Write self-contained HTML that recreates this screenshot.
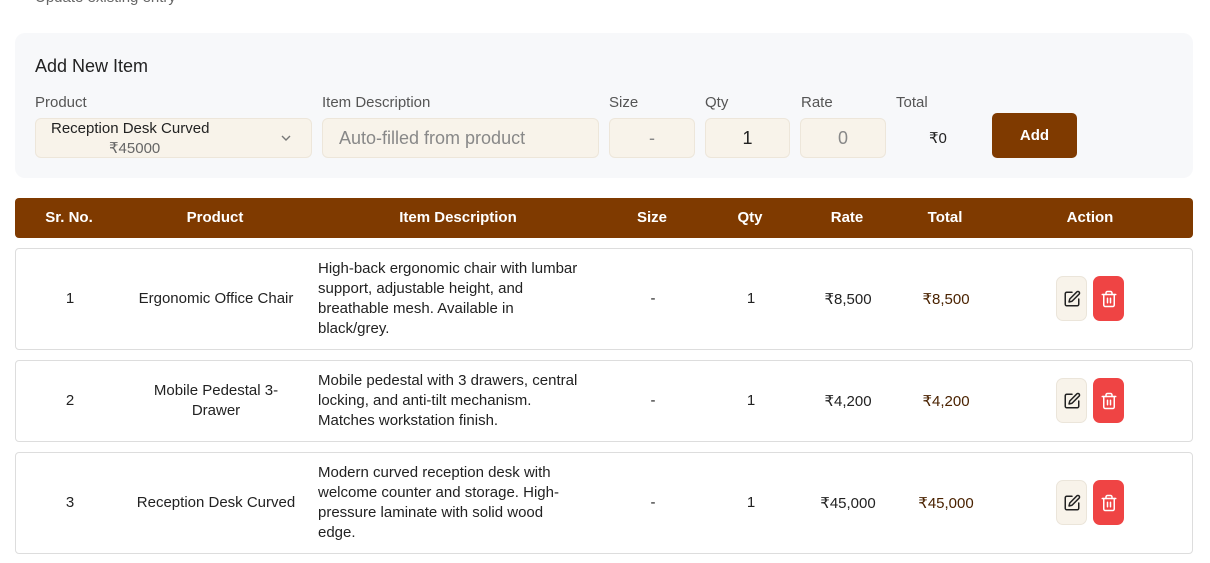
<!DOCTYPE html>
<html><head><meta charset="utf-8"><style>
*{box-sizing:border-box;margin:0;padding:0}
body{width:1210px;height:563px;background:#fff;font-family:"Liberation Sans",sans-serif;color:#222;position:relative;overflow:hidden}
.a{position:absolute}
.panel{left:15px;top:33px;width:1178px;height:145px;background:#f7f8fa;border-radius:10px}
.lbl{font-size:15px;color:#555;top:94px}
.inp{top:118px;height:40px;background:#f8f3ea;border:1px solid #ede6da;border-radius:6px;font-size:18px;color:#888;display:flex;align-items:center;justify-content:center}
.hdr{left:15px;top:198px;width:1178px;height:40px;background:#7f3a00;border-radius:4px;color:#fff;font-weight:bold;font-size:15px}
.hdr span,.row span{position:absolute;transform:translateX(-50%);white-space:nowrap}
.hdr span{top:11px}
.row{left:15px;width:1178px;background:#fff;border:1px solid #ddd;border-radius:4px;font-size:15px;color:#222}
.row .d{transform:none;left:302px;white-space:normal;width:266px;line-height:20px}
.eb,.db{position:absolute;width:31px;height:45px;border-radius:7px;display:flex;align-items:center;justify-content:center}
.eb{left:1040px;background:#f8f3ea;border:1px solid #ebe5da}
.db{left:1077px;background:#ef4444}
</style></head><body>
<div class="a" style="left:35px;top:-11px;font-size:15px;color:#666">Update existing entry</div>
<div class="a panel"></div>
<div class="a" style="left:35px;top:56px;font-size:18px;color:#222">Add New Item</div>
<div class="a lbl" style="left:35px">Product</div>
<div class="a lbl" style="left:322px">Item Description</div>
<div class="a lbl" style="left:609px">Size</div>
<div class="a lbl" style="left:705px">Qty</div>
<div class="a lbl" style="left:801px">Rate</div>
<div class="a lbl" style="left:896px">Total</div>
<div class="a inp" style="left:35px;width:277px;display:block;color:#222">
<div class="a" style="left:15px;top:1px;font-size:15px">Reception Desk Curved</div>
<div class="a" style="left:73px;top:20px;font-size:15px;color:#666">₹45000</div>
<svg class="a" style="left:244px;top:14px" width="12" height="10" viewBox="0 0 12 10"><path d="M2 3l4 4 4-4" fill="none" stroke="#777" stroke-width="1.4"/></svg>
</div>
<div class="a inp" style="left:322px;width:277px;justify-content:flex-start;padding-left:16px">Auto-filled from product</div>
<div class="a inp" style="left:609px;width:86px">-</div>
<div class="a inp" style="left:705px;width:85px;color:#222">1</div>
<div class="a inp" style="left:800px;width:86px">0</div>
<div class="a" style="left:929px;top:129px;font-size:15px">₹0</div>
<div class="a" style="left:992px;top:113px;width:85px;height:45px;background:#7f3a00;border-radius:5px;color:#fff;font-weight:bold;font-size:15px;display:flex;align-items:center;justify-content:center">Add</div>
<div class="a hdr"><span style="left:54px">Sr. No.</span><span style="left:200px">Product</span><span style="left:443px">Item Description</span><span style="left:637px">Size</span><span style="left:735px">Qty</span><span style="left:832px">Rate</span><span style="left:930px">Total</span><span style="left:1075px">Action</span></div>

<div class="a row" style="top:248px;height:102px">
<span style="left:54px;top:41px">1</span><span style="left:200px;top:41px">Ergonomic Office Chair</span>
<span class="d" style="top:10px">High-back ergonomic chair with lumbar support, adjustable height, and breathable mesh. Available in black/grey.</span>
<span style="left:637px;top:41px">-</span><span style="left:735px;top:41px">1</span><span style="left:832px;top:41px">₹8,500</span><span style="left:930px;top:41px;color:#4a2200">₹8,500</span>
<div class="eb" style="top:27px">ED</div><div class="db" style="top:27px">DL</div></div>

<div class="a row" style="top:360px;height:82px">
<span style="left:54px;top:31px">2</span><span style="left:200px;top:20px;text-align:center;line-height:20px;white-space:normal;width:150px">Mobile Pedestal 3-Drawer</span>
<span class="d" style="top:10px">Mobile pedestal with 3 drawers, central locking, and anti-tilt mechanism. Matches workstation finish.</span>
<span style="left:637px;top:31px">-</span><span style="left:735px;top:31px">1</span><span style="left:832px;top:31px">₹4,200</span><span style="left:930px;top:31px;color:#4a2200">₹4,200</span>
<div class="eb" style="top:17px">ED</div><div class="db" style="top:17px">DL</div></div>

<div class="a row" style="top:452px;height:102px">
<span style="left:54px;top:41px">3</span><span style="left:200px;top:41px">Reception Desk Curved</span>
<span class="d" style="top:10px">Modern curved reception desk with welcome counter and storage. High-pressure laminate with solid wood edge.</span>
<span style="left:637px;top:41px">-</span><span style="left:735px;top:41px">1</span><span style="left:832px;top:41px">₹45,000</span><span style="left:930px;top:41px;color:#4a2200">₹45,000</span>
<div class="eb" style="top:27px">ED</div><div class="db" style="top:27px">DL</div></div>
<script>
var e='<svg width="18" height="18" viewBox="0 0 24 24" fill="none" stroke="#222" stroke-width="2" stroke-linecap="round" stroke-linejoin="round"><path d="M12 3H5a2 2 0 0 0-2 2v14a2 2 0 0 0 2 2h14a2 2 0 0 0 2-2v-7"/><path d="M18.4 2.6a2.1 2.1 0 0 1 3 3L12 15l-4 1 1-4z"/></svg>';
var d='<svg width="18" height="18" viewBox="0 0 24 24" fill="none" stroke="#fff" stroke-width="2" stroke-linecap="round" stroke-linejoin="round"><path d="M3 6h18"/><path d="M19 6v14a2 2 0 0 1-2 2H7a2 2 0 0 1-2-2V6"/><path d="M8 6V4a2 2 0 0 1 2-2h4a2 2 0 0 1 2 2v2"/><path d="M10 11v6M14 11v6"/></svg>';
document.querySelectorAll('.eb').forEach(x=>x.innerHTML=e);document.querySelectorAll('.db').forEach(x=>x.innerHTML=d);
</script>
</body></html>
